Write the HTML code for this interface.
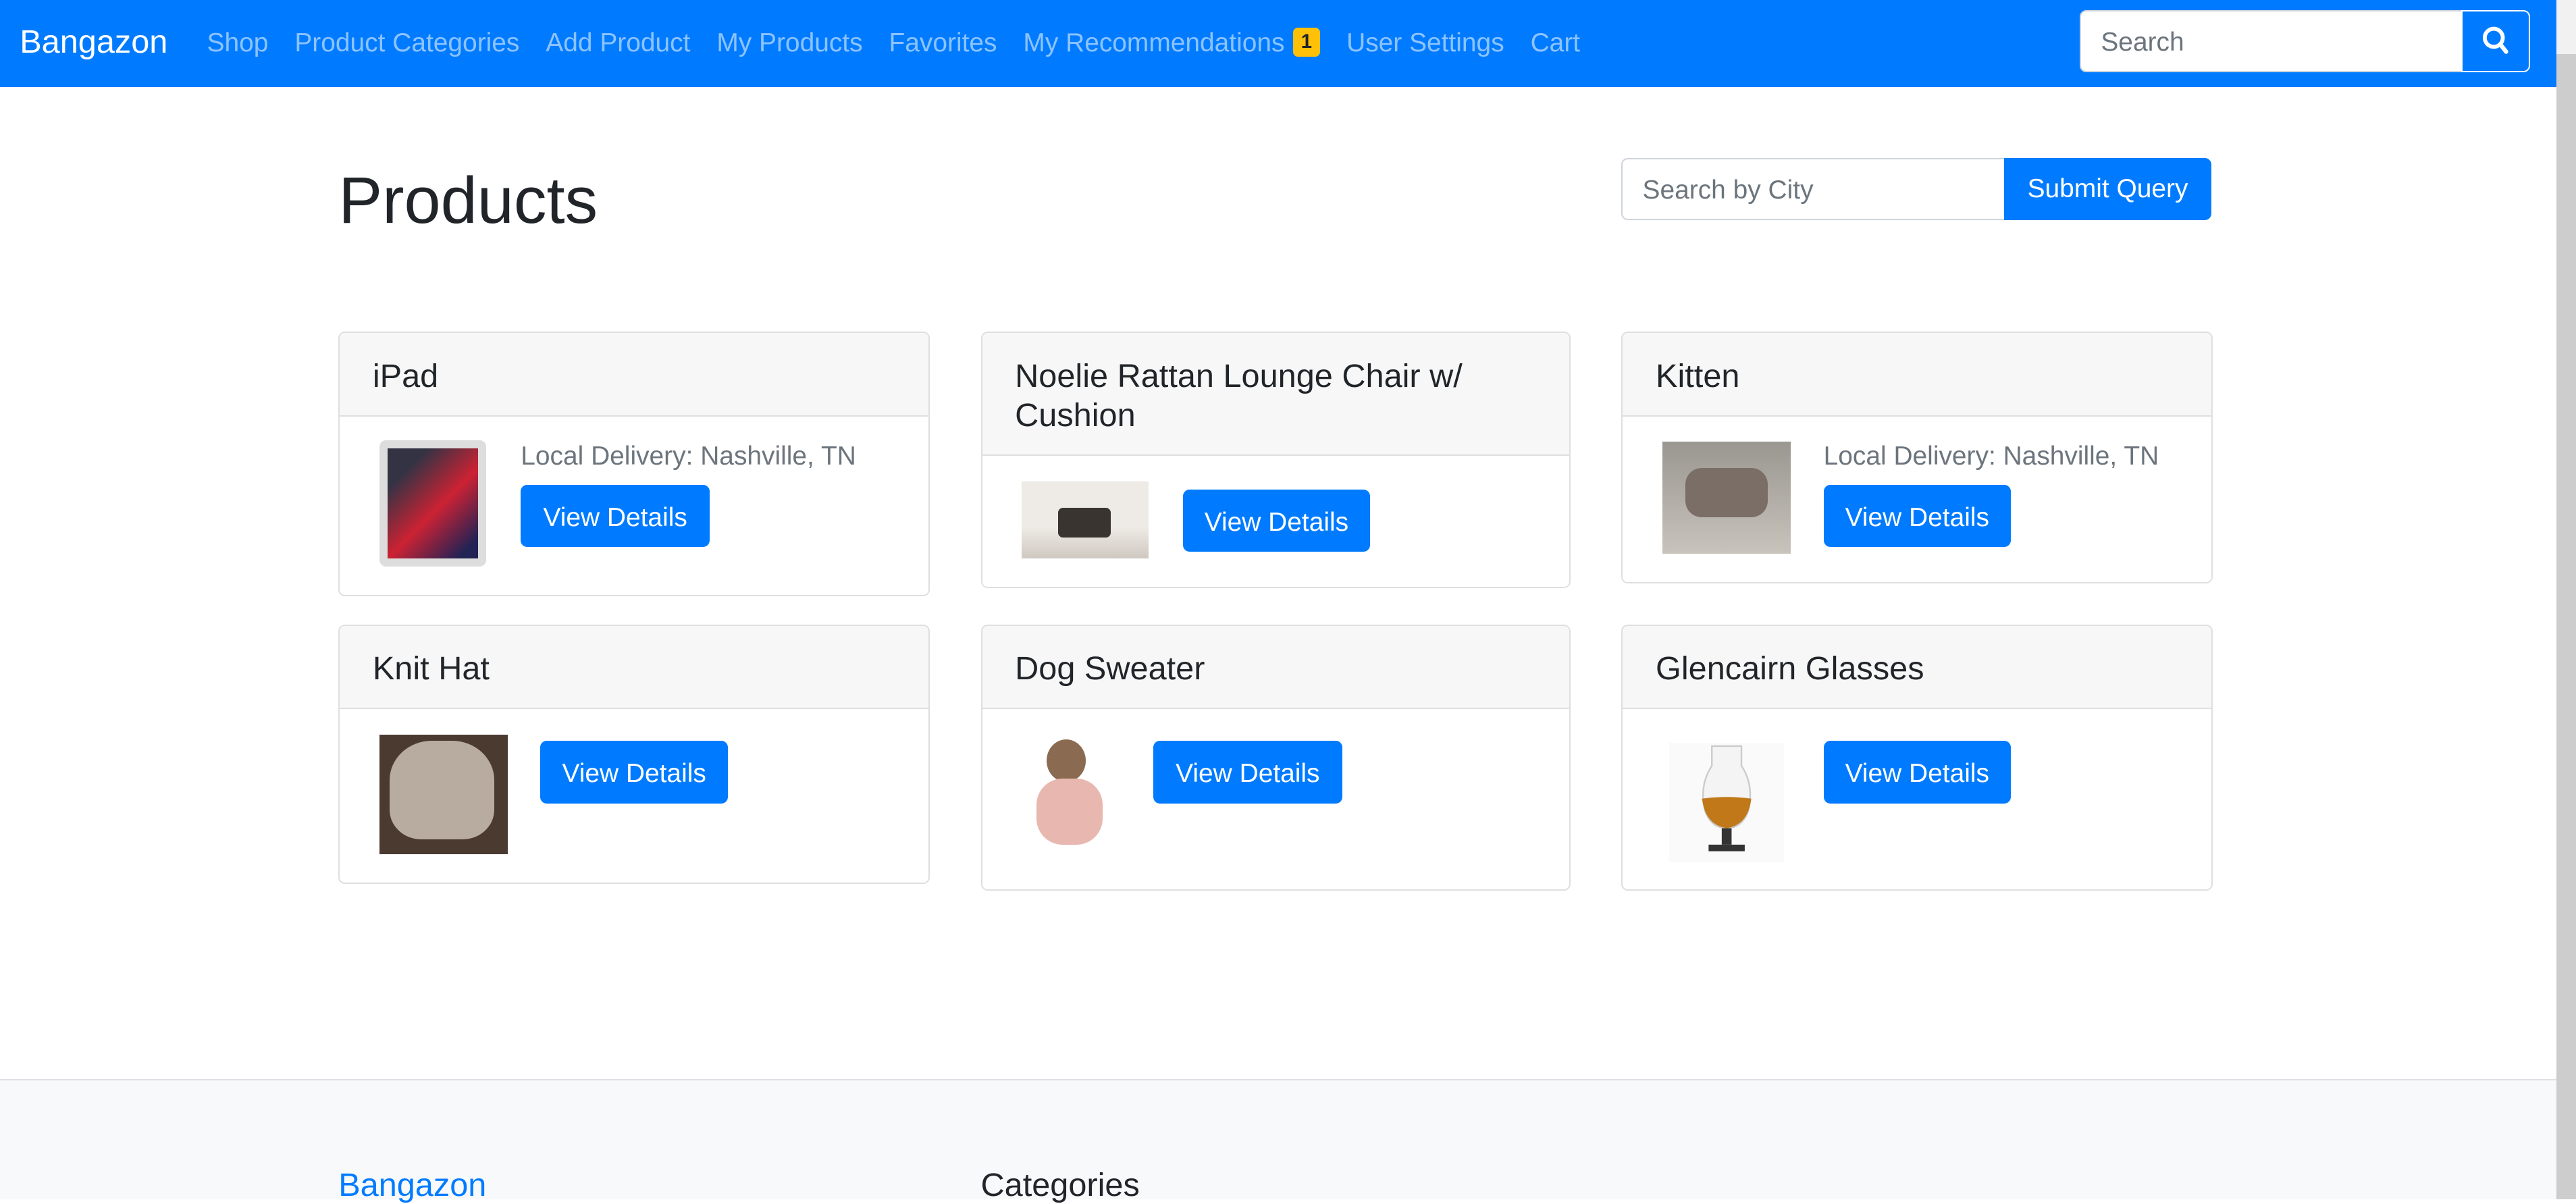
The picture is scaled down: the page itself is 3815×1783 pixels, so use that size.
<!DOCTYPE html>
<html><head><meta charset="utf-8"><style>
html{zoom:2.433}
*{box-sizing:border-box}
body{margin:0;width:1568px;height:730px;overflow:hidden;background:#fff;font-family:"Liberation Sans",sans-serif;color:#212529;position:relative}
.nav{position:absolute;left:0;top:0;width:1556px;height:53px;background:#007bff}
.brand{position:absolute;left:12px;top:14px;font-size:20px;color:#fff}
.links{position:absolute;left:126px;top:17px;font-size:16px;color:rgba(255,255,255,.55);white-space:nowrap}
.links .l{margin-right:16px}
.badge{display:inline-block;background:#ffc107;color:#212529;font-size:12px;font-weight:bold;padding:2px 5px;border-radius:3px;margin-left:5px;vertical-align:2px}
.sin{position:absolute;left:1266px;top:6px;width:234px;height:38px;background:#fff;border:1px solid #ced4da;border-radius:4px 0 0 4px;font-size:16px;color:#6c757d;padding:10px 12px}
.sbtn{position:absolute;left:1498px;top:6px;width:42px;height:38px;background:#007bff;border:1px solid #fff;border-radius:0 4px 4px 0}
.scroll{position:absolute;left:1556px;top:0;width:12px;height:730px;background:#cdcdcd}
.scroll .top{height:33px;background:#f1f1f1}
h1{position:absolute;left:206px;top:99px;margin:0;font-weight:normal;font-size:40px}
.city{position:absolute;left:987px;top:96px;width:234px;height:38px;border:1px solid #ced4da;border-radius:4px 0 0 4px;font-size:16px;color:#6c757d;padding:10px 12px}
.sub{position:absolute;left:1220px;top:96px;width:126px;height:38px;background:#007bff;color:#fff;border-radius:0 4px 4px 0;font-size:16px;padding:10px 0;text-align:center}
.card{position:absolute;border:1px solid #dfdfdf;border-radius:4px;overflow:hidden}
.ch{background:#f7f7f7;border-bottom:1px solid #dfdfdf;font-size:20px;padding:14px 20px 12px;line-height:24px}
.btn{position:absolute;background:#007bff;color:#fff;border-radius:4px;font-size:16px;width:115px;height:38px;text-align:center;line-height:40px}
.loc{position:absolute;font-size:16px;color:#6c757d}
.img{position:absolute}
.footer{position:absolute;left:0;top:657px;width:1556px;height:73px;background:#f8f9fa;border-top:1px solid #dee2e6}
</style></head><body>
<div class="nav">
<div class="brand">Bangazon</div>
<div class="links"><span class="l">Shop</span><span class="l">Product Categories</span><span class="l">Add Product</span><span class="l">My Products</span><span class="l">Favorites</span><span class="l">My Recommendations<span class="badge">1</span></span><span class="l">User Settings</span><span class="l">Cart</span></div>
<div class="sin">Search</div>
<div class="sbtn"><svg width="40" height="36" viewBox="0 0 40 36"><circle cx="19" cy="16" r="5.5" fill="none" stroke="#fff" stroke-width="2.4"/><line x1="23" y1="20" x2="26.5" y2="24.5" stroke="#fff" stroke-width="2.6" stroke-linecap="round"/></svg></div>
</div>
<div class="scroll"><div class="top"></div></div>
<h1>Products</h1>
<div class="city">Search by City</div>
<div class="sub">Submit Query</div>

<div class="card" style="left:206px;top:202px;width:360px;height:161px"><div class="ch">iPad</div></div>
<div class="img" style="left:231px;top:268px;width:65px;height:77px;background:#ddd;border-radius:4px;padding:5px"><div style="width:100%;height:100%;background:linear-gradient(135deg,#334 20%,#c23 55%,#225 90%)"></div></div>
<div class="loc" style="left:317px;top:269px">Local Delivery: Nashville, TN</div>
<div class="btn" style="left:317px;top:295px">View Details</div>

<div class="card" style="left:597px;top:202px;width:359px;height:156px"><div class="ch">Noelie Rattan Lounge Chair w/<br>Cushion</div></div>
<div class="img" style="left:622px;top:293px;width:77px;height:47px;background:linear-gradient(#eeeae5 60%,#cfc8c0)"><div style="position:absolute;left:22px;top:16px;width:32px;height:18px;background:#3a3430;border-radius:3px"></div></div>
<div class="btn" style="left:720px;top:298px;width:114px">View Details</div>

<div class="card" style="left:987px;top:202px;width:360px;height:153px"><div class="ch">Kitten</div></div>
<div class="img" style="left:1012px;top:269px;width:78px;height:68px;background:linear-gradient(#9a9690,#c8c4bc)"><div style="position:absolute;left:14px;top:16px;width:50px;height:30px;background:#7a6e66;border-radius:10px"></div></div>
<div class="loc" style="left:1110px;top:269px">Local Delivery: Nashville, TN</div>
<div class="btn" style="left:1110px;top:295px;width:114px">View Details</div>

<div class="card" style="left:206px;top:380px;width:360px;height:158px"><div class="ch">Knit Hat</div></div>
<div class="img" style="left:231px;top:447px;width:78px;height:73px;background:#4a3a30"><div style="position:absolute;left:6px;top:4px;width:64px;height:60px;background:#b8aca0;border-radius:40% 40% 30% 30%"></div></div>
<div class="btn" style="left:329px;top:451px;width:114px">View Details</div>

<div class="card" style="left:597px;top:380px;width:359px;height:162px"><div class="ch">Dog Sweater</div></div>
<div class="img" style="left:627px;top:450px;width:50px;height:72px"><div style="position:absolute;left:10px;top:0;width:24px;height:26px;background:#8a6a50;border-radius:50%"></div><div style="position:absolute;left:4px;top:24px;width:40px;height:40px;background:#e8b8b0;border-radius:40%"></div></div>
<div class="btn" style="left:702px;top:451px;width:115px">View Details</div>

<div class="card" style="left:987px;top:380px;width:360px;height:162px"><div class="ch">Glencairn Glasses</div></div>
<div class="img" style="left:1016px;top:452px;width:70px;height:73px;background:#fafafa"><svg width="70" height="73"><path d="M26 2 L44 2 L44 14 Q52 26 48 42 Q44 52 35 52 Q26 52 22 42 Q18 26 26 14Z" fill="#f4f4f4" stroke="#ccc"/><path d="M20 34 Q35 32 50 34 Q48 50 35 52 Q22 50 20 34Z" fill="#c07818"/><rect x="32" y="52" width="6" height="10" fill="#333"/><rect x="24" y="62" width="22" height="4" fill="#333"/></svg></div>
<div class="btn" style="left:1110px;top:451px;width:114px">View Details</div>

<div class="footer">
<div style="position:absolute;left:206px;top:52px;font-size:20px;color:#007bff">Bangazon</div>
<div style="position:absolute;left:597px;top:52px;font-size:20px;color:#212529">Categories</div>
</div>
</body></html>
